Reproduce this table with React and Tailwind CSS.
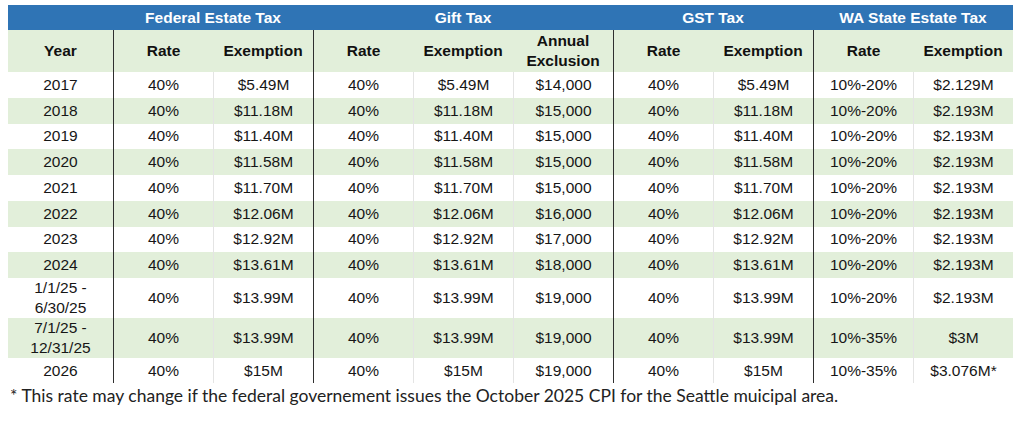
const rows = [
  { year: '2017', fedRate: '40%', fedEx: '$5.49M', giftRate: '40%', giftEx: '$5.49M', annual: '$14,000', gstRate: '40%', gstEx: '$5.49M', waRate: '10%-20%', waEx: '$2.129M' },
  { year: '2018', fedRate: '40%', fedEx: '$11.18M', giftRate: '40%', giftEx: '$11.18M', annual: '$15,000', gstRate: '40%', gstEx: '$11.18M', waRate: '10%-20%', waEx: '$2.193M' },
  { year: '2019', fedRate: '40%', fedEx: '$11.40M', giftRate: '40%', giftEx: '$11.40M', annual: '$15,000', gstRate: '40%', gstEx: '$11.40M', waRate: '10%-20%', waEx: '$2.193M' },
  { year: '2020', fedRate: '40%', fedEx: '$11.58M', giftRate: '40%', giftEx: '$11.58M', annual: '$15,000', gstRate: '40%', gstEx: '$11.58M', waRate: '10%-20%', waEx: '$2.193M' },
  { year: '2021', fedRate: '40%', fedEx: '$11.70M', giftRate: '40%', giftEx: '$11.70M', annual: '$15,000', gstRate: '40%', gstEx: '$11.70M', waRate: '10%-20%', waEx: '$2.193M' },
  { year: '2022', fedRate: '40%', fedEx: '$12.06M', giftRate: '40%', giftEx: '$12.06M', annual: '$16,000', gstRate: '40%', gstEx: '$12.06M', waRate: '10%-20%', waEx: '$2.193M' },
  { year: '2023', fedRate: '40%', fedEx: '$12.92M', giftRate: '40%', giftEx: '$12.92M', annual: '$17,000', gstRate: '40%', gstEx: '$12.92M', waRate: '10%-20%', waEx: '$2.193M' },
  { year: '2024', fedRate: '40%', fedEx: '$13.61M', giftRate: '40%', giftEx: '$13.61M', annual: '$18,000', gstRate: '40%', gstEx: '$13.61M', waRate: '10%-20%', waEx: '$2.193M' },
  { year: ['1/1/25 -', '6/30/25'], tall: true, fedRate: '40%', fedEx: '$13.99M', giftRate: '40%', giftEx: '$13.99M', annual: '$19,000', gstRate: '40%', gstEx: '$13.99M', waRate: '10%-20%', waEx: '$2.193M' },
  { year: ['7/1/25 -', '12/31/25'], tall: true, fedRate: '40%', fedEx: '$13.99M', giftRate: '40%', giftEx: '$13.99M', annual: '$19,000', gstRate: '40%', gstEx: '$13.99M', waRate: '10%-35%', waEx: '$3M' },
  { year: '2026', short: true, fedRate: '40%', fedEx: '$15M', giftRate: '40%', giftEx: '$15M', annual: '$19,000', gstRate: '40%', gstEx: '$15M', waRate: '10%-35%', waEx: '$3.076M*' },
];

// dark line before each tax group, light line inside a group
const DARK = 'border-l border-[#2f2f2f]';
const LIGHT = 'border-l border-[#e4e4e4]';

const cols = [
  { key: 'fedRate', line: DARK },
  { key: 'fedEx', line: LIGHT },
  { key: 'giftRate', line: DARK },
  { key: 'giftEx', line: LIGHT },
  { key: 'annual', line: LIGHT },
  { key: 'gstRate', line: DARK },
  { key: 'gstEx', line: LIGHT },
  { key: 'waRate', line: DARK },
  { key: 'waEx', line: LIGHT },
];

const gridCols = 'grid grid-cols-[105px_repeat(9,100px)]';

function Cell({ children, className = '' }) {
  return (
    <div className={`flex flex-col items-center justify-center text-center leading-[20px] ${className}`}>
      {children}
    </div>
  );
}

export default function App() {
  return (
    <div className="w-[1024px] h-[422px] bg-white pt-[5px] pl-[8px] text-[15.5px] text-[#161616] font-['Liberation_Sans',Arial,sans-serif]">
      <div className="w-[1005px]">
        {/* group header */}
        <div className={`${gridCols} h-[25px] bg-[#2f74b5] font-bold text-white`}>
          <div />
          <Cell className="col-span-2">Federal Estate Tax</Cell>
          <Cell className="col-span-3">Gift Tax</Cell>
          <Cell className="col-span-2">GST Tax</Cell>
          <Cell className="col-span-2">WA State Estate Tax</Cell>
        </div>

        {/* column header */}
        <div className={`${gridCols} h-[42px] bg-[#e2efda] font-bold text-[#111]`}>
          <Cell>Year</Cell>
          <Cell className={DARK}>Rate</Cell>
          <Cell>Exemption</Cell>
          <Cell className={DARK}>Rate</Cell>
          <Cell>Exemption</Cell>
          <Cell>
            <span>Annual</span>
            <span>Exclusion</span>
          </Cell>
          <Cell className={DARK}>Rate</Cell>
          <Cell>Exemption</Cell>
          <Cell className={DARK}>Rate</Cell>
          <Cell>Exemption</Cell>
        </div>

        {rows.map((r, i) => (
          <div
            key={i}
            className={`${gridCols} ${r.tall ? 'h-[40px]' : r.short ? 'h-[25px]' : 'h-[25.75px]'} ${i % 2 === 1 ? 'bg-[#e2efda]' : 'bg-white'}`}
          >
            <Cell>
              {Array.isArray(r.year) ? r.year.map((l) => <span key={l}>{l}</span>) : r.year}
            </Cell>
            {cols.map((c) => (
              <Cell key={c.key} className={c.line}>{r[c.key]}</Cell>
            ))}
          </div>
        ))}
      </div>

      <p className="mt-[2px] pl-[2px] text-[17.5px] leading-[22px] text-[#222] font-['Lato','Open_Sans',sans-serif]">
        * This rate may change if the federal governement issues the October 2025 CPI for the Seattle muicipal area.
      </p>
    </div>
  );
}
